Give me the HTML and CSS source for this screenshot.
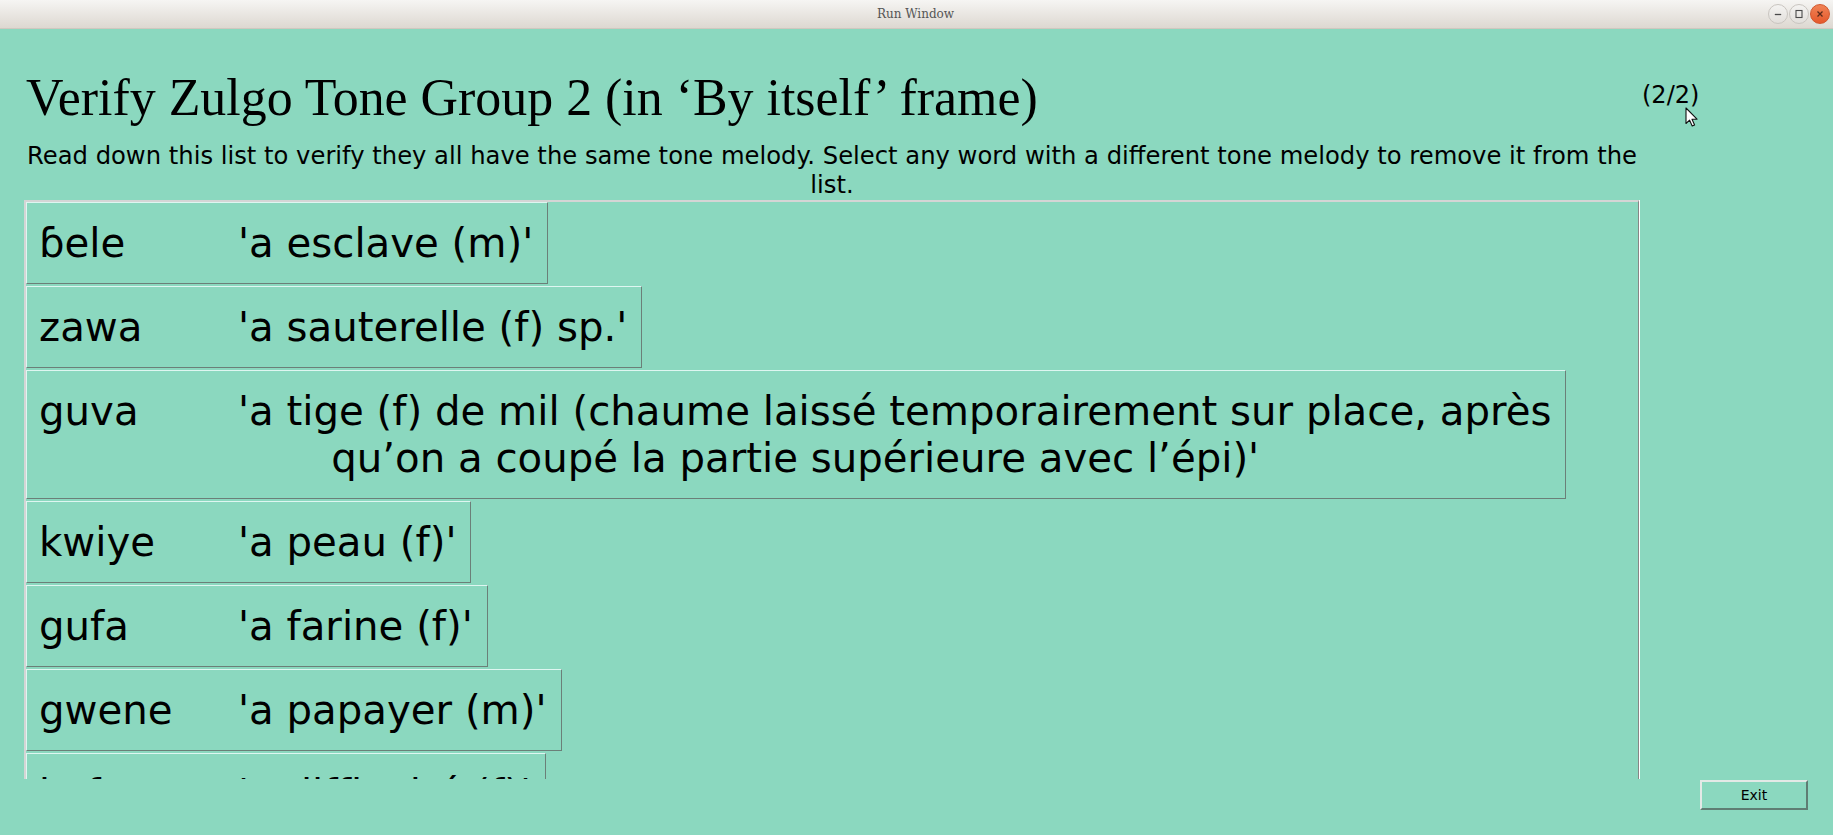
FILE: index.html
```html
<!DOCTYPE html>
<html lang="fr">
<head>
<meta charset="utf-8">
<title>Run Window</title>
<link rel="stylesheet" href="styles.css">
</head>
<body>
<div class="window">
  <header class="titlebar">
    <span class="titlebar-text">Run Window</span>
    <div class="wm-buttons">
      <span class="wm-btn"><svg width="10" height="10" viewBox="0 0 10 10"><path d="M1.8 5.5h6.4" stroke="#4a4a4a" stroke-width="1.3"/></svg></span>
      <span class="wm-btn"><svg width="10" height="10" viewBox="0 0 10 10"><rect x="2" y="1.5" width="6" height="7" fill="none" stroke="#4a4a4a" stroke-width="1.1"/></svg></span>
      <span class="wm-btn wm-close"><svg width="10" height="10" viewBox="0 0 10 10"><path d="M2.5 2.5l5 5M7.5 2.5l-5 5" stroke="#5a2a1a" stroke-width="1.3"/></svg></span>
    </div>
  </header>
  <div class="app">
    <main class="left">
      <h1 class="title">Verify Zulgo Tone Group 2 (in ‘By itself’ frame)</h1>
      <p class="instructions">Read down this list to verify they all have the same tone melody. Select any word with a different tone melody to remove it from the<br>list.</p>
      <div class="list-frame">
        <div class="list">
          <button class="entry"><span class="word">ɓele</span>'a esclave (m)'</button>
          <button class="entry"><span class="word">zawa</span>'a sauterelle (f) sp.'</button>
          <button class="entry"><span class="word">guva</span>'a tige (f) de mil (chaume laissé temporairement sur place, après<br>qu’on a coupé la partie supérieure avec l’épi)'</button>
          <button class="entry"><span class="word">kwiye</span>'a peau (f)'</button>
          <button class="entry"><span class="word">gufa</span>'a farine (f)'</button>
          <button class="entry"><span class="word">gwene</span>'a papayer (m)'</button>
          <button class="entry"><span class="word">kafa</span>'a difficulté (f)'</button>
        </div>
      </div>
    </main>
    <aside class="right">
      <div class="counter">(2/2)</div>
      <button class="exit">Exit</button>
    </aside>
  </div>
  <svg class="cursor" width="13" height="20" viewBox="0 0 13 20"><path d="M1 1v15.5l3.6-3.4 2.6 5.9 2.4-1-2.6-5.8h5z" fill="#fff" stroke="#111" stroke-width="1.1" stroke-linejoin="round"/></svg>
</div>
</body>
</html>
```

FILE: styles.css
```css
* { box-sizing: border-box; }
html, body { margin: 0; padding: 0; }
body {
  width: 1833px;
  height: 835px;
  overflow: hidden;
  background: #8bd8bf;
  font-family: "DejaVu Sans", sans-serif;
  color: #000;
}
.window {
  position: relative;
  width: 1833px;
  height: 835px;
  display: flex;
  flex-direction: column;
}
.titlebar {
  height: 29px;
  flex: 0 0 29px;
  background: linear-gradient(#f6f5f3, #ddd8d1);
  border-bottom: 1px solid #cfc8bf;
  display: flex;
  align-items: center;
  justify-content: center;
  position: relative;
}
.titlebar-text {
  font-family: "DejaVu Serif", "Liberation Serif", serif;
  font-size: 12px;
  color: #555;
  margin-left: -2px;
}
.wm-buttons {
  position: absolute;
  right: 3px;
  top: 4px;
  display: flex;
  gap: 1px;
}
.wm-btn {
  width: 20px;
  height: 20px;
  border-radius: 50%;
  background: linear-gradient(#f4f3f1, #e2dfdb);
  border: 1px solid #c9c5c0;
  display: flex;
  align-items: center;
  justify-content: center;
}
.wm-close {
  background: linear-gradient(#f08356, #e5582b);
  border-color: #d2562c;
}
.app {
  flex: 1;
  display: flex;
}
.left {
  width: 1616px;
  margin-left: 24px;
  display: flex;
  flex-direction: column;
}
.title {
  margin: 39px 0 0 2px;
  font-family: "Liberation Serif", "DejaVu Serif", serif;
  font-weight: normal;
  font-size: 51.9px;
  line-height: 60px;
  height: 60px;
  white-space: nowrap;
}
.instructions {
  margin: 13px 0 0 0;
  font-size: 24.25px;
  line-height: 29px;
  text-align: center;
  white-space: nowrap;
}
.list-frame {
  margin-top: 1px;
  height: 579px;
  width: 1615px;
  border-top: 2px solid #d5d5d5;
  border-left: 2px solid #d5d5d5;
  border-right: 1px solid #868686;
  box-shadow: 1px 0 0 #ffffff;
  overflow: hidden;
}
.list {
  display: flex;
  flex-direction: column;
  align-items: flex-start;
  gap: 2px;
}
.entry {
  font-family: "DejaVu Sans", sans-serif;
  font-size: 40.25px;
  line-height: 47px;
  color: #000;
  background: #8bd8bf;
  text-align: center;
  padding: 17px 14px 16px 12px;
  border: 1px solid;
  border-color: #def6f1 #6b7f78 #6b7f78 #def6f1;
  border-radius: 0;
  margin: 0;
  white-space: nowrap;
}
.word {
  display: inline-block;
  width: 199px;
  text-align: left;
}
.right {
  flex: 1;
  display: flex;
  flex-direction: column;
  align-items: flex-start;
}
.counter {
  margin: 52px 0 0 2px;
  font-size: 24px;
  line-height: 28px;
}
.exit {
  margin: auto 0 25px 60px;
  width: 108px;
  height: 30px;
  font-family: "DejaVu Sans", sans-serif;
  font-size: 14px;
  color: #000;
  background: #8bd8bf;
  border: 2px solid;
  border-color: #e3e9e6 #5f7d73 #5f7d73 #e3e9e6;
  border-radius: 0;
  padding: 0;
}
.cursor {
  position: absolute;
  left: 1685px;
  top: 107px;
}
```
